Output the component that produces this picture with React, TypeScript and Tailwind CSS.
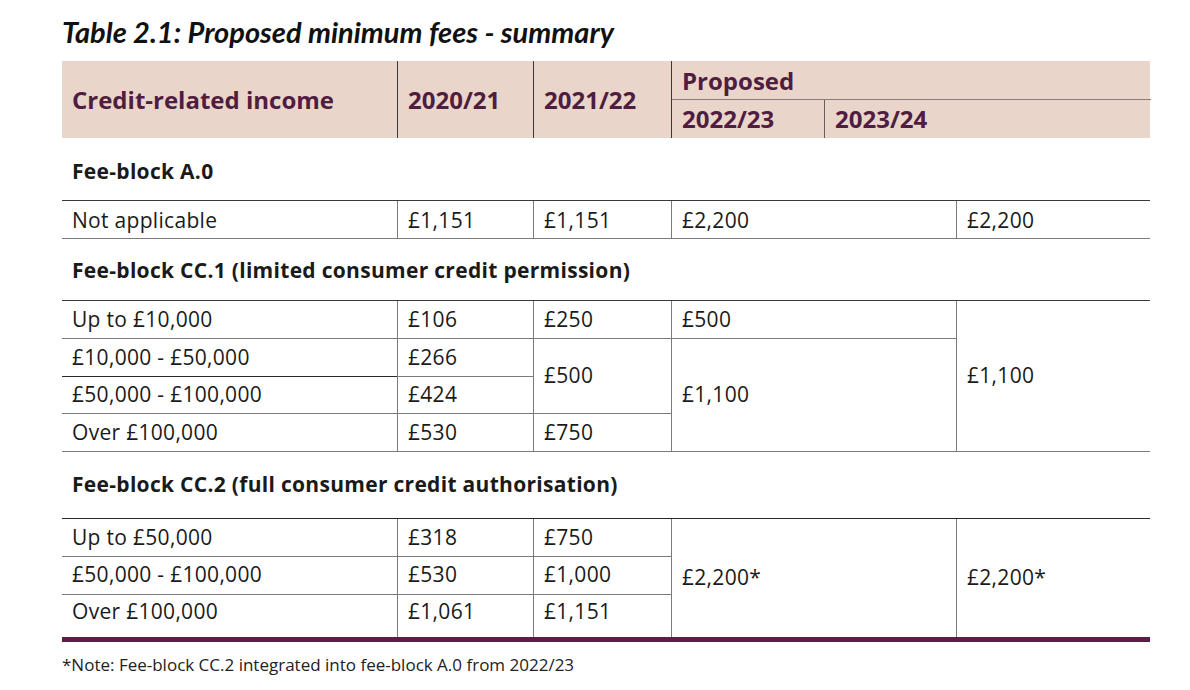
import type { ReactNode } from "react";

const COLS = "grid-cols-[335px_136px_138px_285px_194px]";

function Cell({
  children,
  className = "",
}: {
  children?: ReactNode;
  className?: string;
}) {
  return (
    <div className={`flex items-center pl-[10px] ${className}`}>{children}</div>
  );
}

function SectionHeading({ title, h }: { title: string; h: string }) {
  return (
    <div className={`flex items-center pl-[10px] text-[21px] font-bold tracking-[0.3px] text-[#1a1a1a] ${h}`}>
      {title}
    </div>
  );
}

export default function App() {
  const line = "border-[#7b7b7b]";
  return (
    <div className="min-h-[690px] w-[1190px] bg-white pl-[62px] pt-[15px] font-['Open_Sans',sans-serif] text-[21px] tracking-[0.3px] text-[#1a1a1a]">
      <h1 className="font-['Lato',sans-serif] text-[29px] font-bold italic leading-[1.2] tracking-normal text-[#111]">
        Table 2.1: Proposed minimum fees - summary
      </h1>

      {/* header band */}
      <div className="mt-[11px] grid h-[77px] w-[1088px] grid-cols-[335px_136px_138px_479px] bg-[#ead5cb] text-[24px] font-bold tracking-normal text-[#4e1d40]">
        <Cell className="pt-[2px]">Credit-related income</Cell>
        <Cell className="border-l border-[#3a3a3a] pt-[2px]">2020/21</Cell>
        <Cell className="border-l border-[#3a3a3a] pt-[2px]">2021/22</Cell>
        <div className="grid grid-rows-[39px_38px] border-l border-[#3a3a3a]">
          <Cell className="border-b border-[#8c7b78] pt-[2px]">Proposed</Cell>
          <div className="grid grid-cols-[152px_327px]">
            <Cell>2022/23</Cell>
            <Cell className="border-l border-[#6b5c5a]">2023/24</Cell>
          </div>
        </div>
      </div>

      <div className="w-[1088px]">
        {/* fee-block A.0 */}
        <SectionHeading title="Fee-block A.0" h="h-[62px] pt-[5px]" />
        <div className={`grid ${COLS} grid-rows-[38px] border-t border-[#3a3a3a] pt-[0px]`}>
          <Cell className={`border-b ${line} pt-[3px]`}>Not applicable</Cell>
          <Cell className={`border-b border-l ${line} pt-[3px]`}>£1,151</Cell>
          <Cell className={`border-b border-l ${line} pt-[3px]`}>£1,151</Cell>
          <Cell className={`border-b border-l ${line} pt-[3px]`}>£2,200</Cell>
          <Cell className={`border-b border-l ${line} pt-[3px]`}>£2,200</Cell>
        </div>

        {/* fee-block CC.1 */}
        <SectionHeading title="Fee-block CC.1 (limited consumer credit permission)" h="h-[61px] pt-[2px]" />
        <div className={`grid ${COLS} grid-rows-[38px_38px_37px_38px] border-t border-[#3a3a3a]`}>
          <Cell className={`border-b ${line}`}>Up to £10,000</Cell>
          <Cell className={`border-b border-l ${line}`}>£106</Cell>
          <Cell className={`border-b border-l ${line}`}>£250</Cell>
          <Cell className={`border-b border-l ${line}`}>£500</Cell>
          <Cell className={`row-span-4 border-b border-l ${line}`}>£1,100</Cell>

          <Cell className="border-b border-[#2a2a2a]">£10,000 - £50,000</Cell>
          <Cell className={`border-b border-l ${line}`}>£266</Cell>
          <Cell className={`row-span-2 border-b border-l ${line}`}>£500</Cell>
          <Cell className={`row-span-3 border-b border-l ${line}`}>£1,100</Cell>

          <Cell className={`border-b ${line}`}>£50,000 - £100,000</Cell>
          <Cell className={`border-b border-l ${line}`}>£424</Cell>

          <Cell className={`border-b ${line}`}>Over £100,000</Cell>
          <Cell className={`border-b border-l ${line}`}>£530</Cell>
          <Cell className={`border-b border-l ${line}`}>£750</Cell>
        </div>

        {/* fee-block CC.2 */}
        <SectionHeading title="Fee-block CC.2 (full consumer credit authorisation)" h="h-[66px]" />
        <div className={`grid ${COLS} grid-rows-[38px_38px_42px] border-t border-b-[5px] border-t-[#2a2a2a] border-b-[#5a1f47]`}>
          <Cell className={`border-b ${line}`}>Up to £50,000</Cell>
          <Cell className={`border-b border-l ${line}`}>£318</Cell>
          <Cell className={`border-b border-l ${line}`}>£750</Cell>
          <Cell className={`row-span-3 border-l ${line}`}>£2,200*</Cell>
          <Cell className={`row-span-3 border-l ${line}`}>£2,200*</Cell>

          <Cell className={`border-b ${line} pb-[2px]`}>£50,000 - £100,000</Cell>
          <Cell className={`border-b border-l ${line} pb-[2px]`}>£530</Cell>
          <Cell className={`border-b border-l ${line} pb-[2px]`}>£1,000</Cell>

          <Cell className="pb-[8px]">Over £100,000</Cell>
          <Cell className={`border-l ${line} pb-[8px]`}>£1,061</Cell>
          <Cell className={`border-l ${line} pb-[8px]`}>£1,151</Cell>
        </div>
      </div>

      <p className="mt-[10px] text-[17px] tracking-normal text-[#222]">
        *Note: Fee-block CC.2 integrated into fee-block A.0 from 2022/23
      </p>
    </div>
  );
}
